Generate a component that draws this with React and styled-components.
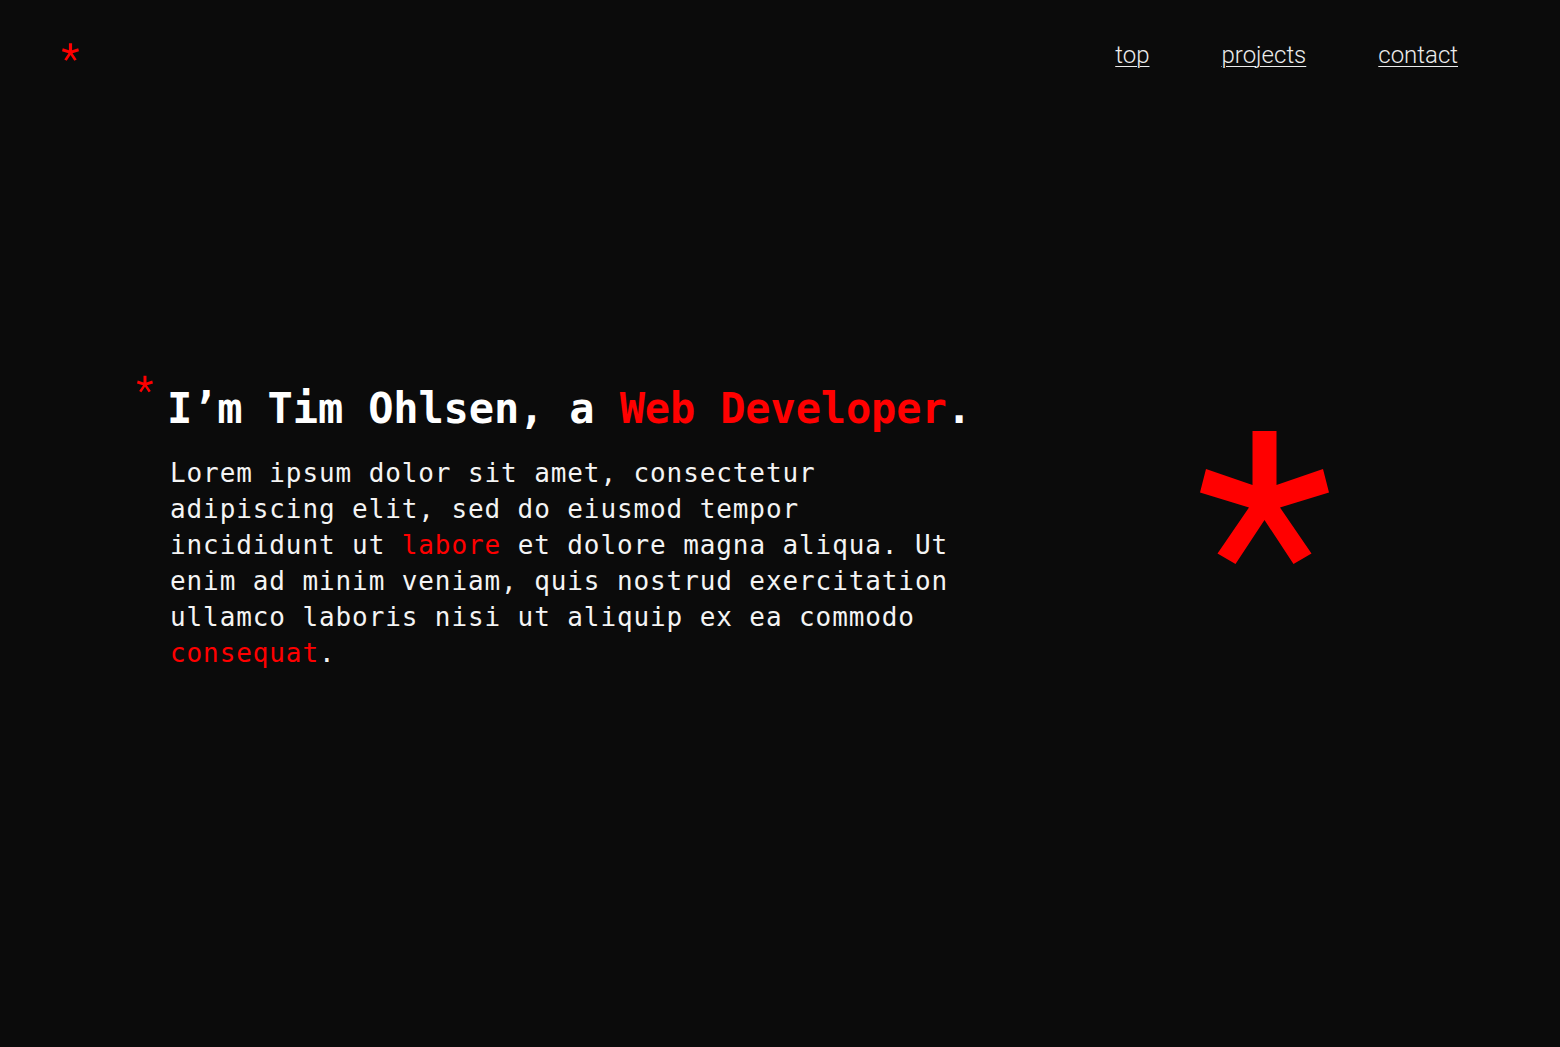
import React from "react";
import styled, { createGlobalStyle } from "styled-components";

const Global = createGlobalStyle`
  html, body { margin: 0; padding: 0; background: #0b0b0b; }
  body { font-family: "DejaVu Sans Mono", "Liberation Mono", monospace; color: #fff; }
  * { box-sizing: border-box; }
`;

const RED = "#ff0000";

const Page = styled.div`
  min-height: 100vh;
  background: #0b0b0b;
  display: flex;
  flex-direction: column;
`;

const Header = styled.header`
  display: flex;
  justify-content: space-between;
  align-items: flex-start;
  padding: 41px 102px 0 62px;
`;

const LogoLink = styled.a`
  display: block;
  margin-top: 2px;
  line-height: 0;
`;

const Nav = styled.nav`
  display: flex;
  gap: 72px;
`;

const NavLink = styled.a`
  font-family: Roboto, "Liberation Sans", sans-serif;
  font-weight: 300;
  font-size: 24px;
  line-height: 28px;
  color: #ececec;
  text-decoration: underline;
  text-decoration-thickness: 1px;
  text-underline-offset: 3px;
`;

const Hero = styled.main`
  display: flex;
  justify-content: space-between;
  align-items: flex-start;
  padding: 306px 231px 0 137px;
`;

const Intro = styled.section`
  display: flex;
  flex-direction: column;
`;

const TitleRow = styled.div`
  display: flex;
  align-items: flex-start;
  gap: 14px;
`;

const Title = styled.h1`
  margin: 0;
  padding-top: 9px;
  font-family: "DejaVu Sans Mono", "Liberation Mono", monospace;
  font-weight: 700;
  font-size: 42px;
  line-height: 50px;
  letter-spacing: -0.14px;
  color: #fff;
  white-space: nowrap;
`;

const Accent = styled.span`
  color: ${RED};
`;

const Text = styled.p`
  margin: 21px 0 0 ${(p) => p.$indent}px;
  width: 800px;
  font-size: 26px;
  line-height: 36px;
  letter-spacing: 0.9px;
  color: #f4f4f4;
`;

const Decor = styled.div`
  margin-top: 56px;
  line-height: 0;
`;

const Asterisk = ({ w, h }) => (
  <svg width={w} height={h} viewBox="0 0 129 133" aria-hidden="true">
    <polygon
      fill={RED}
      points="52.5,0 76.5,0 76.5,54 123,38 129,61.5 80,76.5 111.5,122.5 93.5,133 64.5,89 35.5,133 17.5,122.5 49,76.5 0,61.5 6,38 52.5,54"
    />
  </svg>
);

export default function App() {
  return (
    <Page>
      <Global />
      <Header>
        <LogoLink href="#top" aria-label="home">
          <Asterisk w={17} h={18} />
        </LogoLink>
        <Nav>
          <NavLink href="#top">top</NavLink>
          <NavLink href="#projects">projects</NavLink>
          <NavLink href="#contact">contact</NavLink>
        </Nav>
      </Header>
      <Hero>
        <Intro>
          <TitleRow>
            <Asterisk w={16} h={18} />
            <Title>
              I’m Tim Ohlsen, a <Accent>Web Developer</Accent>.
            </Title>
          </TitleRow>
          <Text $indent={33}>
            Lorem ipsum dolor sit amet, consectetur adipiscing elit, sed do
            eiusmod tempor incididunt ut <Accent>labore</Accent> et dolore
            magna aliqua. Ut enim ad minim veniam, quis nostrud exercitation
            ullamco laboris nisi ut aliquip ex ea commodo{" "}
            <Accent>consequat</Accent>.
          </Text>
        </Intro>
        <Decor>
          <Asterisk w={129} h={133} />
        </Decor>
      </Hero>
    </Page>
  );
}
